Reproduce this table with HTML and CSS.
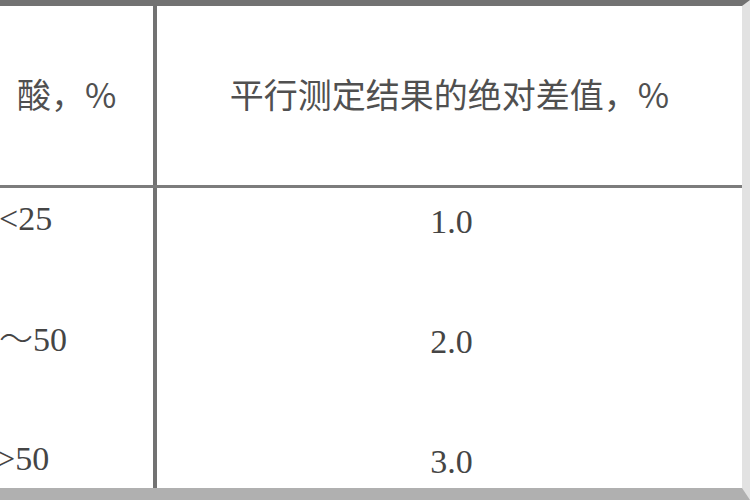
FILE: index.html
```html
<!DOCTYPE html>
<html>
<head>
<meta charset="utf-8">
<link rel="stylesheet" href="styles.css">
</head>
<body>
<div class="table">
  <div class="head">
    <div class="cell left"><span class="hl">酸，%</span></div>
    <div class="cell right">平行测定结果的绝对差值，%</div>
  </div>
  <div class="body">
    <div class="col left">
      <div class="item i1">&lt;25</div>
      <div class="item i2"><span class="cjk">～</span>50</div>
      <div class="item i3">&gt;50</div>
    </div>
    <div class="col right">
      <div class="item num">1.0</div>
      <div class="item num">2.0</div>
      <div class="item num">3.0</div>
    </div>
  </div>
</div>
</body>
</html>
```

FILE: styles.css
```css
html, body {
  margin: 0;
  padding: 0;
  background: #ffffff;
}
body {
  width: 750px;
  height: 500px;
  overflow: hidden;
}
.table {
  box-sizing: border-box;
  width: 750px;
  height: 500px;
  border-top: 6px solid #727272;
  border-bottom: 12px solid #b0b0b0;
  border-right: 8px solid #e2e2e2;
  color: #454545;
  font-family: "Liberation Serif", "Noto Sans CJK SC", serif;
  display: flex;
  flex-direction: column;
}
.head {
  display: flex;
  height: 179px;
  border-bottom: 3px solid #7c7c7c;
  font-family: "Noto Sans CJK SC", sans-serif;
  font-size: 34px;
  font-weight: 400;
  color: #505050;
}
.cell {
  display: flex;
  align-items: center;
  padding-bottom: 4px;
  box-sizing: border-box;
}
.left {
  width: 157px;
  box-sizing: border-box;
  border-right: 4px solid #727272;
  overflow: hidden;
}
.right {
  flex: 1;
  justify-content: center;
}
.hl {
  padding-left: 17px;
  white-space: nowrap;
}
.body {
  display: flex;
  flex: 1;
}
.col {
  display: flex;
  flex-direction: column;
  gap: 80px;
  padding-top: 11px;
  font-size: 34px;
}
.col.right {
  align-items: center;
  padding-top: 8px;
}
.item {
  height: 40px;
  line-height: 40px;
  white-space: nowrap;
}
.i1 { text-indent: -1px; }
.i2 { text-indent: -1px; margin-top: -2px; }
.i3 { text-indent: -4px; margin-top: 2px; }
.cjk {
  font-family: "Noto Sans CJK SC", sans-serif;
  font-weight: 300;
}
.num {
  padding-left: 4px;
}
```
